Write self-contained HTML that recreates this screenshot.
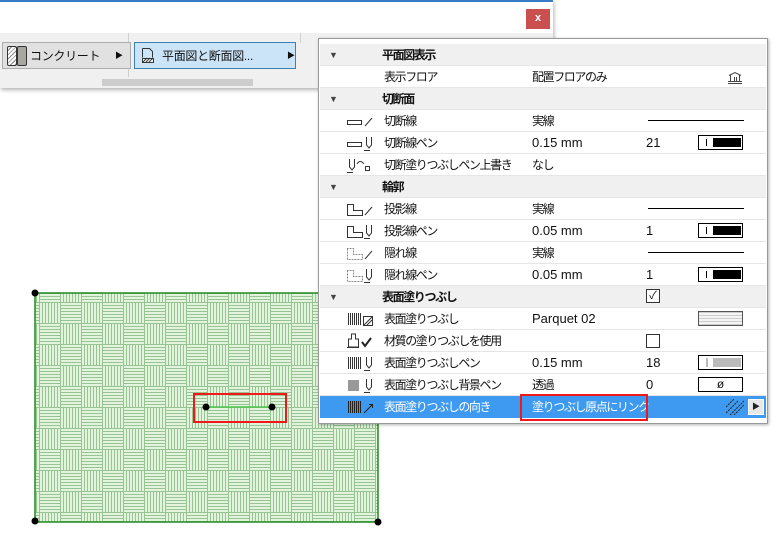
<!DOCTYPE html>
<html><head><meta charset="utf-8"><style>
body{margin:0;width:780px;height:537px;background:#fff;position:relative;overflow:hidden;font-family:"Liberation Sans","Noto Sans CJK JP",sans-serif;font-size:12px;letter-spacing:-1.4px;color:#111}
.abs{position:absolute}
.tbt{letter-spacing:-0.3px}
#win{left:0;top:0;width:553px;height:88px;background:#fff;box-shadow:1px 2px 4px rgba(0,0,0,.3);border-top:2px solid #3a7bc8;box-sizing:border-box}
#tb{left:0;top:33px;width:553px;height:55px;background:#f0f0f0}
.btn{top:42px;height:27px;box-sizing:border-box;border:1px solid #adadad;background:#e1e1e1}
#panel{left:318px;top:38px;width:450px;height:386px;background:#fff;border:1px solid #999;box-sizing:border-box;box-shadow:1px 1px 3px rgba(0,0,0,.3)}
.row{position:absolute;left:1px;width:446px;height:21px;border-bottom:1px solid #e6e6e6;line-height:22px}
.hd{background:#f0f0f0;font-weight:bold}
.row span{position:absolute;white-space:nowrap}
.l{left:64px}.v{left:212px}.n{left:326px}
.num{font-size:13px;letter-spacing:0}
.tri{left:9px;font-size:9px;color:#444;letter-spacing:0}
.hdt{left:62px}
.sw{position:absolute;left:378px;top:3px;width:45px;height:15px;border:1px solid #000;box-sizing:border-box;background:#fff}
.ln{position:absolute;left:328px;top:10px;width:96px;height:1px;background:#000}
.ic{position:absolute;left:26px;top:2px}
</style></head><body>
<div id="win" class="abs"></div>
<div id="tb" class="abs"></div>
<div class="abs" style="left:526px;top:9px;width:24px;height:20px;background:#c9504f;color:#fff;font-size:11px;letter-spacing:0;text-align:center;line-height:19px;font-weight:bold">x</div>
<div class="abs" style="left:128px;top:33px;width:1px;height:44px;background:#d0d0d0"></div>
<div class="abs" style="left:300px;top:33px;width:1px;height:10px;background:#d0d0d0"></div>
<div class="abs btn" style="left:2px;width:129px"></div>
<div class="abs" style="left:7px;top:46px;width:8px;height:18px;border:1px solid #333;border-radius:2px;background:repeating-linear-gradient(135deg,#fff 0 2px,#888 2px 3px)"></div>
<div class="abs" style="left:17px;top:46px;width:8px;height:18px;border:1px solid #333;border-radius:2px;background:#a8a8a0"></div>
<div class="abs tbt" style="left:30px;top:47px">コンクリート</div>
<div class="abs" style="left:115px;top:50px;font-size:8px">▶</div>
<div class="abs btn" style="left:134px;width:162px;background:#cce4f7;border-color:#3c7fb1"></div>
<svg class="abs" style="left:140px;top:46px" width="16" height="18"><path d="M2.5 2.5h7l3 3v6M2.5 2.5v9" fill="none" stroke="#333"/><rect x="2.5" y="12.5" width="11" height="4" fill="#fff" stroke="#333"/><path d="M3 16l4-4M6 16l4-4M9 16l4-4" stroke="#333"/></svg>
<div class="abs tbt" style="left:162px;top:47px">平面図と断面図...</div>
<div class="abs" style="left:287px;top:50px;font-size:8px">▶</div>
<div class="abs" style="left:102px;top:79px;width:151px;height:7px;background:#cdcdcd"></div>

<svg class="abs" style="left:0;top:0" width="780" height="537">
<defs>
<pattern id="pq" x="39" y="281" width="42" height="42" patternUnits="userSpaceOnUse">
<rect width="42" height="42" fill="#e2f5dc"/>
<g stroke="#98c495" stroke-width="1">
<path d="M0 3.5h21M0 6.5h21M0 9.5h21M0 12.5h21M0 15.5h21M0 18.5h21"/>
<path d="M21 24.5h21M21 27.5h21M21 30.5h21M21 33.5h21M21 36.5h21M21 39.5h21"/>
<path d="M24.5 0v21M27.5 0v21M30.5 0v21M33.5 0v21M36.5 0v21M39.5 0v21"/>
<path d="M3.5 21v21M6.5 21v21M9.5 21v21M12.5 21v21M15.5 21v21M18.5 21v21"/>
<path d="M0.5 0v42M21.5 0v42M0 0.5h42M0 21.5h42"/>
</g></pattern></defs>
<rect x="35" y="293" width="343" height="229" fill="url(#pq)" stroke="#1e8a1e" stroke-width="1.5"/>
<circle cx="35" cy="293" r="3.5"/><circle cx="378" cy="293" r="3.5"/><circle cx="35" cy="521" r="3.5"/><circle cx="378" cy="522" r="3.5"/>
<line x1="206" y1="407" x2="272" y2="407" stroke="#4cc44c" stroke-width="1.5"/>
<circle cx="206" cy="407" r="3.5"/><circle cx="272" cy="407" r="3.5"/>
<rect x="194" y="394" width="92" height="28" fill="none" stroke="#f01818" stroke-width="2"/>
</svg>

<div id="panel" class="abs">
<div class="row hd" style="top:5px"><span class="tri">▼</span><span class="hdt">平面図表示</span></div>
<div class="row" style="top:27px"><span class="l">表示フロア</span><span class="v">配置フロアのみ</span><svg style="position:absolute;left:407px;top:4px" width="16" height="14"><path d="M2 5.5l6-3 6 3M3.5 5v6M12.5 5v6M1 11.5h14M1 13.5h14M7.5 7v4M9.5 7v4" fill="none" stroke="#444"/></svg></div>
<div class="row hd" style="top:49px"><span class="tri">▼</span><span class="hdt">切断面</span></div>
<div class="row" style="top:71px"><svg class="ic" width="32" height="18"><rect x="1.5" y="8.5" width="14" height="4" fill="none" stroke="#333"/><path d="M19 14l7-8" stroke="#333"/></svg><span class="l">切断線</span><span class="v">実線</span><div class="ln"></div></div>
<div class="row" style="top:93px"><svg class="ic" width="32" height="18"><rect x="1.5" y="8.5" width="14" height="4" fill="none" stroke="#333"/><path d="M20.5 3v8l2.5 3 2.5-3V3M18 16.5h6" fill="none" stroke="#333"/></svg><span class="l">切断線ペン</span><span class="v num">0.15 mm</span><span class="n num">21</span><div class="sw"><div class="abs" style="left:7px;top:3px;width:1px;height:7px;background:#000"></div><div class="abs" style="left:14px;top:2px;width:28px;height:9px;background:#000"></div></div></div>
<div class="row" style="top:115px"><svg class="ic" width="36" height="18"><path d="M3.5 3v8l2.5 3 2.5-3V3M1 16.5h6M11 8q3-5 7 0" fill="none" stroke="#333"/><rect x="19.5" y="10.5" width="4" height="4" fill="none" stroke="#333"/></svg><span class="l">切断塗りつぶしペン上書き</span><span class="v">なし</span></div>
<div class="row hd" style="top:137px"><span class="tri">▼</span><span class="hdt">輪郭</span></div>
<div class="row" style="top:159px"><svg class="ic" width="32" height="18"><path d="M1.5 4.5v11h15v-5h-9v-6z" fill="none" stroke="#333"/><path d="M19 15l7-8" stroke="#333"/></svg><span class="l">投影線</span><span class="v">実線</span><div class="ln"></div></div>
<div class="row" style="top:181px"><svg class="ic" width="32" height="18"><path d="M1.5 4.5v11h15v-5h-9v-6z" fill="none" stroke="#333"/><path d="M20.5 3v8l2.5 3 2.5-3V3M18 16.5h6" fill="none" stroke="#333"/></svg><span class="l">投影線ペン</span><span class="v num">0.05 mm</span><span class="n num">1</span><div class="sw"><div class="abs" style="left:7px;top:3px;width:1px;height:7px;background:#000"></div><div class="abs" style="left:14px;top:2px;width:28px;height:9px;background:#000"></div></div></div>
<div class="row" style="top:203px"><svg class="ic" width="32" height="18"><path d="M1.5 4.5v11h15v-5h-9v-6z" fill="none" stroke="#888" stroke-dasharray="2 1"/><path d="M19 15l7-8" stroke="#333"/></svg><span class="l">隠れ線</span><span class="v">実線</span><div class="ln"></div></div>
<div class="row" style="top:225px"><svg class="ic" width="32" height="18"><path d="M1.5 4.5v11h15v-5h-9v-6z" fill="none" stroke="#888" stroke-dasharray="2 1"/><path d="M20.5 3v8l2.5 3 2.5-3V3M18 16.5h6" fill="none" stroke="#333"/></svg><span class="l">隠れ線ペン</span><span class="v num">0.05 mm</span><span class="n num">1</span><div class="sw"><div class="abs" style="left:7px;top:3px;width:1px;height:7px;background:#000"></div><div class="abs" style="left:14px;top:2px;width:28px;height:9px;background:#000"></div></div></div>
<div class="row hd" style="top:247px"><span class="tri">▼</span><span class="hdt">表面塗りつぶし</span><div class="abs" style="left:326px;top:3px;width:12px;height:12px;border:1px solid #333;background:#fff;font-size:11px;letter-spacing:0;line-height:12px;text-align:center;font-weight:normal">✓</div></div>
<div class="row" style="top:269px"><svg class="ic" width="32" height="18"><path d="M2.5 3v12M4.5 3v12M6.5 3v12M8.5 3v12M10.5 3v12M12.5 3v12M14.5 3v12" stroke="#333"/><rect x="17.5" y="6.5" width="9" height="9" fill="none" stroke="#333"/><path d="M18 15l8-8M21 15l5-5" stroke="#333"/></svg><span class="l">表面塗りつぶし</span><span class="v num">Parquet 02</span><div class="sw" style="border-color:#555;background:repeating-linear-gradient(0deg,#ccc 0 1px,#f4f4f4 1px 3px)"></div></div>
<div class="row" style="top:291px"><svg class="ic" width="32" height="18"><path d="M5.5 2v5h-3v8h10V7h-3V2zM1 15.5h12" fill="none" stroke="#333"/><path d="M16 10l3 4 6-8" fill="none" stroke="#222" stroke-width="2"/></svg><span class="l">材質の塗りつぶしを使用</span><div class="abs" style="left:326px;top:4px;width:12px;height:12px;border:1px solid #333;background:#fff"></div></div>
<div class="row" style="top:313px"><svg class="ic" width="32" height="18"><path d="M2.5 3v12M4.5 3v12M6.5 3v12M8.5 3v12M10.5 3v12M12.5 3v12M14.5 3v12" stroke="#333"/><path d="M20.5 3v8l2.5 3 2.5-3V3M18 16.5h6" fill="none" stroke="#333"/></svg><span class="l">表面塗りつぶしペン</span><span class="v num">0.15 mm</span><span class="n num">18</span><div class="sw"><div class="abs" style="left:7px;top:2px;width:2px;height:9px;background:#bbb"></div><div class="abs" style="left:14px;top:2px;width:28px;height:9px;background:#bbb"></div></div></div>
<div class="row" style="top:335px"><svg class="ic" width="32" height="18"><rect x="2" y="4" width="11" height="11" fill="#999"/><path d="M20.5 3v8l2.5 3 2.5-3V3M18 16.5h6" fill="none" stroke="#333"/></svg><span class="l">表面塗りつぶし背景ペン</span><span class="v">透過</span><span class="n num">0</span><div class="sw" style="text-align:center;line-height:13px;font-size:12px;letter-spacing:0">ø</div></div>
<div class="row" style="top:357px;background:#3d9af0;color:#fff;border-bottom:none;height:22px"><svg class="ic" width="32" height="18"><path d="M2.5 3v12M4.5 3v12M6.5 3v12M8.5 3v12M10.5 3v12M12.5 3v12M14.5 3v12" stroke="#222"/><path d="M18 15l8-8M23 6.5h3.5v3.5" fill="none" stroke="#222"/></svg><span class="l">表面塗りつぶしの向き</span><span class="v">塗りつぶし原点にリンク</span>
<svg style="position:absolute;left:406px;top:3px" width="18" height="16"><path d="M0 14l12-12M4 16l14-14M8 16l10-10M0 8l8-8" stroke="#222" stroke-dasharray="2 1"/></svg>
<div class="abs" style="left:428px;top:3px;width:14px;height:14px;border:1px solid #fff;background:#e8e8e8;color:#222;font-size:8px;letter-spacing:0;text-align:center;line-height:14px">▶</div></div>
<div class="abs" style="left:201px;top:355px;width:124px;height:23px;border:2px solid #f01818"></div>
</div>
</body></html>
